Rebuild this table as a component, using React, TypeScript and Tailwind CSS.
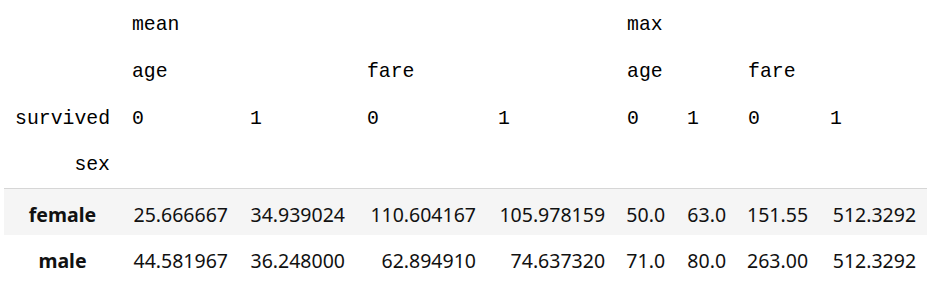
import React from 'react';

const head = "font-['Liberation_Mono',monospace] text-[19.8px] font-normal text-black pt-[4px]";
const num = "text-right pr-[11px] pt-[5px] font-['Noto_Sans',sans-serif] text-[19.5px] text-[#111]";
const th = `${head} text-left pl-[11px] align-middle`;

const rows = [
  { name: 'female', values: ['25.666667', '34.939024', '110.604167', '105.978159', '50.0', '63.0', '151.55', '512.3292'], striped: true },
  { name: 'male', values: ['44.581967', '36.248000', '62.894910', '74.637320', '71.0', '80.0', '263.00', '512.3292'], striped: false },
];

export default function App() {
  return (
    <div className="bg-white w-[941px] h-[289px] overflow-hidden pl-[4px]">
      <table className="table-fixed border-collapse w-[923px]">
        <colgroup>
          <col className="w-[117px]" />
          <col className="w-[118px]" />
          <col className="w-[117px]" />
          <col className="w-[131px]" />
          <col className="w-[129px]" />
          <col className="w-[60px]" />
          <col className="w-[61px]" />
          <col className="w-[82px]" />
          <col className="w-[108px]" />
        </colgroup>
        <thead>
          <tr className="h-[47px]">
            <th />
            <th colSpan={4} className={th}>mean</th>
            <th colSpan={4} className={th}>max</th>
          </tr>
          <tr className="h-[47px]">
            <th />
            <th colSpan={2} className={th}>age</th>
            <th colSpan={2} className={th}>fare</th>
            <th colSpan={2} className={th}>age</th>
            <th colSpan={2} className={th}>fare</th>
          </tr>
          <tr className="h-[47px]">
            <th className={`${head} text-right pr-[11px]`}>survived</th>
            <th className={th}>0</th>
            <th className={th}>1</th>
            <th className={th}>0</th>
            <th className={th}>1</th>
            <th className={th}>0</th>
            <th className={th}>1</th>
            <th className={th}>0</th>
            <th className={th}>1</th>
          </tr>
          <tr className="h-[47px] border-b border-[#d6d6d6]">
            <th className={`${head} text-right pr-[11px]`}>sex</th>
            <th colSpan={8} />
          </tr>
        </thead>
        <tbody>
          {rows.map((r) => (
            <tr key={r.name} className={`h-[47px] ${r.striped ? 'bg-[#f5f5f5]' : 'bg-white'}`}>
              <th className="text-center pt-[5px] font-['Noto_Sans',sans-serif] text-[19.5px] font-bold text-[#111]">{r.name}</th>
              {r.values.map((v, i) => (
                <td key={i} className={num}>{v}</td>
              ))}
            </tr>
          ))}
        </tbody>
      </table>
    </div>
  );
}
